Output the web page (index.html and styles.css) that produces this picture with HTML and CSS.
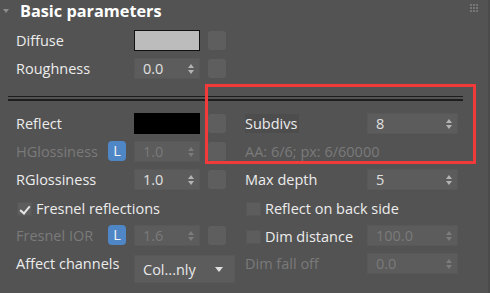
FILE: index.html
```html
<!DOCTYPE html>
<html>
<head>
    <title>Basic parameters</title>
    <link rel="stylesheet" href="styles.css">
</head>
<body>
    <div class="panel">
        <div class="header">
            <span class="caret"></span>
            <span class="title">Basic parameters</span>
            <svg class="grip" width="8" height="8" viewBox="0 0 8 8">
                <rect x="0" y="0" width="2" height="2"/><rect x="3" y="0" width="2" height="2"/><rect x="6" y="0" width="2" height="2"/>
                <rect x="0" y="3" width="2" height="2"/><rect x="3" y="3" width="2" height="2"/><rect x="6" y="3" width="2" height="2"/>
                <rect x="0" y="6" width="2" height="2"/><rect x="3" y="6" width="2" height="2"/><rect x="6" y="6" width="2" height="2"/>
            </svg>
        </div>

        <div class="grid">
            <!-- diffuse -->
            <div class="lbl">Diffuse</div>
            <div></div>
            <div class="swatch light"></div>
            <div class="btn"></div>
            <div></div><div></div><div></div>

            <div class="lbl">Roughness</div>
            <div></div>
            <div class="spin">0.0<span class="arrows"></span></div>
            <div class="btn"></div>
            <div></div><div></div><div></div>

            <div class="sep"></div>

            <!-- reflection -->
            <div class="lbl">Reflect</div>
            <div></div>
            <div class="swatch dark"></div>
            <div class="btn"></div>
            <div></div>
            <div class="lbl"><span class="focus">Subdivs</span></div>
            <div class="spin">8<span class="arrows"></span></div>

            <div class="lbl off">HGlossiness</div>
            <div class="badge">L</div>
            <div class="spin off">1.0<span class="arrows"></span></div>
            <div class="btn"></div>
            <div></div>
            <div class="lbl off wide">AA: 6/6; px: 6/60000</div>

            <div class="lbl">RGlossiness</div>
            <div></div>
            <div class="spin">1.0<span class="arrows"></span></div>
            <div class="btn"></div>
            <div></div>
            <div class="lbl">Max depth</div>
            <div class="spin">5<span class="arrows"></span></div>

            <label class="check span4"><span class="box on"></span>Fresnel reflections</label>
            <div></div>
            <label class="check wide"><span class="box"></span>Reflect on back side</label>

            <div class="lbl off">Fresnel IOR</div>
            <div class="badge">L</div>
            <div class="spin off">1.6<span class="arrows"></span></div>
            <div class="btn"></div>
            <div></div>
            <label class="check"><span class="box"></span>Dim distance</label>
            <div class="spin off">100.0<span class="arrows"></span></div>

            <div class="lbl">Affect channels</div>
            <div></div>
            <div class="drop">Col...nly<span class="tri"></span></div>
            <div class="lbl off">Dim fall off</div>
            <div class="spin off">0.0<span class="arrows"></span></div>
        </div>

        <div class="highlight"></div>
    </div>
</body>
</html>
```

FILE: styles.css
```css
html, body {
    margin: 0;
    background: #535353;
}
body {
    font-family: "Open Sans", "Noto Sans", sans-serif;
    font-size: 14.5px;
    color: #ececec;
}
.panel {
    position: relative;
    width: 488px;
    height: 293px;
    border-right: 2px solid #4b4b4b;
    overflow: hidden;
}
.header {
    height: 26px;
    display: flex;
    align-items: center;
    padding-left: 3px;
}
.caret {
    width: 0;
    height: 0;
    border-left: 3px solid transparent;
    border-right: 3px solid transparent;
    border-top: 4px solid #8c8c8c;
    margin-top: -4px;
}
.title {
    margin-left: 11px;
    margin-top: -5px;
    font-weight: bold;
    font-size: 16.3px;
    color: #ffffff;
}
.grip {
    margin-left: auto;
    margin-right: 10px;
    margin-top: -10px;
    fill: #767676;
}
.grid {
    display: grid;
    grid-template-columns: 92px 26px 66px 26px 19px 122px 91px;
    grid-template-rows: 28px 28px 27px;
    grid-auto-rows: 28px;
    padding-left: 16px;
    align-items: center;
}
.lbl {
    white-space: nowrap;
}
.focus {
    display: inline-block;
    height: 19px;
    line-height: 19px;
    padding-right: 2px;
    background: #4d4d4d;
}
.off {
    color: #7a7a7a;
}
.wide {
    grid-column: span 2;
}
.span4 {
    grid-column: span 4;
}
.swatch {
    height: 19px;
    border: 1px solid #111;
}
.swatch.light {
    background: #bcbcbc;
}
.swatch.dark {
    background: #000;
    border-color: #000;
}
.btn {
    justify-self: end;
    width: 18px;
    height: 19px;
    background: #5e5e5e;
    border-radius: 3px;
}
.spin {
    position: relative;
    height: 21px;
    line-height: 20px;
    padding-left: 8px;
    background: #5c5c5c;
    border: 1px solid #585858;
    box-sizing: border-box;
    color: #e0e0e0;
}
.spin.off {
    color: #7a7a7a;
}
.arrows {
    position: absolute;
    right: 5px;
    top: 5px;
    width: 0;
    height: 0;
    border-left: 3px solid transparent;
    border-right: 3px solid transparent;
    border-bottom: 4px solid #b4b4b4;
}
.arrows::after {
    content: "";
    position: absolute;
    left: -3px;
    top: 6px;
    border-left: 3px solid transparent;
    border-right: 3px solid transparent;
    border-top: 4px solid #b4b4b4;
}
.spin.off .arrows {
    border-bottom-color: #7c7c7c;
}
.spin.off .arrows::after {
    border-top-color: #7c7c7c;
}
.badge {
    width: 18px;
    height: 20px;
    line-height: 20px;
    text-align: center;
    background: #4f86c6;
    border-radius: 4px;
    color: #f4f4f4;
}
.sep {
    grid-column: 1 / -1;
    margin-left: -8px;
    margin-right: -5px;
    height: 2px;
    border-top: 1px solid #1e1e1e;
    border-bottom: 2px solid #1e1e1e;
    align-self: start;
    margin-top: 14px;
}
.check {
    display: flex;
    align-items: center;
    white-space: nowrap;
    margin-top: 3px;
}
.box {
    position: relative;
    width: 15px;
    height: 14px;
    margin-left: 1px;
    margin-right: 4px;
    background: #5d5d5d;
    box-sizing: border-box;
    border: 1px solid #575757;
}
.box.on::after {
    content: "";
    position: absolute;
    left: 4px;
    top: 1px;
    width: 4px;
    height: 8px;
    border-right: 2px solid #e6e6e6;
    border-bottom: 2px solid #e6e6e6;
    transform: rotate(40deg);
}
.drop {
    position: relative;
    grid-column: span 3;
    width: 101px;
    height: 28px;
    line-height: 27px;
    box-sizing: border-box;
    padding-left: 8px;
    background: #5c5c5c;
    border: 1px solid #585858;
    align-self: start;
    margin-top: 6px;
    color: #e8e8e8;
}
.tri {
    position: absolute;
    right: 11px;
    top: 11px;
    border-left: 4px solid transparent;
    border-right: 4px solid transparent;
    border-top: 5px solid #e0e0e0;
}
.highlight {
    position: absolute;
    left: 205px;
    top: 84px;
    width: 271px;
    height: 80px;
    box-sizing: border-box;
    border: 3px solid #f23a3a;
    pointer-events: none;
}
```
